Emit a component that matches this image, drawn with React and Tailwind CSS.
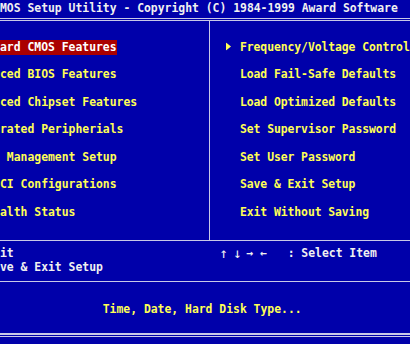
import React from 'react';

// Award BIOS main menu, as it shows inside the cropped window
const leftItems = [
    'ard CMOS Features',
    'ced BIOS Features',
    'ced Chipset Features',
    'rated Peripherials',
    ' Management Setup',
    'CI Configurations',
    'alth Status',
];

const rightItems = [
    'Frequency/Voltage Control',
    'Load Fail-Safe Defaults',
    'Load Optimized Defaults',
    'Set Supervisor Password',
    'Set User Password',
    'Save & Exit Setup',
    'Exit Without Saving',
];

const Rule = () => <div className="h-px bg-[#c8c8e8]" />;

const App = () => {
    return (
        <div className="w-[410px] h-[344px] overflow-hidden bg-[#0000aa] text-[11.4px] leading-[13.75px] font-bold whitespace-pre [font-family:'DejaVu_Sans_Mono','Liberation_Mono',monospace]">
            <div className="h-[18px] pt-[2px] text-[#f0f0f0]">
                MOS Setup Utility - Copyright (C) 1984-1999 Award Software
            </div>
            <Rule />
            <div className="h-px" />
            <Rule />

            <div className="flex h-[219px]">
                <div className="w-[209px] pt-[12.75px]">
                    {leftItems.map((item, i) => (
                        <div key={item} className="h-[27.5px] flex items-center">
                            <span className={i === 0 ? 'bg-[#aa0000] text-white py-px' : 'text-[#ffff55]'}>
                                {item}
                            </span>
                        </div>
                    ))}
                </div>
                <div className="w-px bg-[#c8c8e8]" />
                <div className="flex-1 pt-[12.75px] text-[#ffff55] tracking-[-0.07px]">
                    {rightItems.map((item, i) => (
                        <div key={item} className="h-[27.5px] flex items-center pl-[16px]">
                            <span className="w-[14px] flex items-center -translate-y-[1.5px]">
                                {i === 0 && (
                                    <svg width="5" height="8" viewBox="0 0 5 8">
                                        <path d="M0 0 L5 4 L0 8 Z" fill="#ffff55" />
                                    </svg>
                                )}
                            </span>
                            <span>{item}</span>
                        </div>
                    ))}
                </div>
            </div>

            <Rule />
            <div className="h-[40px] pt-[6.1px] text-[#f0f0f0]">
                <div className="h-[13.75px] flex items-center">
                    <div className="w-[219.2px]">it</div>
                    <div className="flex items-center">
                        <span className="w-[13.7px] text-[14px] font-normal">↑</span>
                        <span className="w-[13.7px] text-[14px] font-normal">↓</span>
                        <span className="w-[13.7px]">→</span>
                        <span className="w-[13.7px]">←</span>
                        <span>  : Select Item</span>
                    </div>
                </div>
                <div className="h-[13.75px]">ve &amp; Exit Setup</div>
            </div>
            <Rule />
            <div className="h-[51px] pt-[20.5px] pl-[102.75px] text-[#ffff55]">
                Time, Date, Hard Disk Type...
            </div>
            <div className="h-[2px] bg-[#c8c8e8]" />
            <div className="h-px" />
            <Rule />
        </div>
    );
};

export default App;
